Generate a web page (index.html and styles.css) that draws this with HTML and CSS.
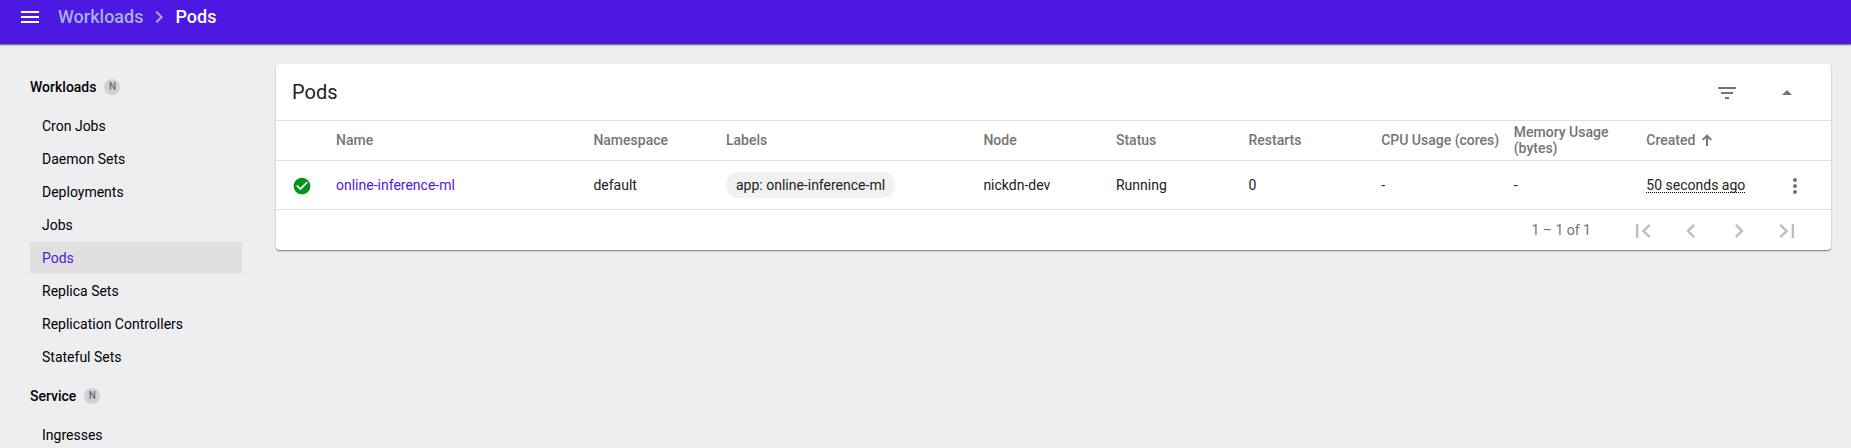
FILE: index.html
```html
<!DOCTYPE html>
<html lang="en">
<head>
<meta charset="utf-8">
<title>Pods</title>
<link rel="stylesheet" href="styles.css">
</head>
<body>
<header class="toolbar">
  <svg class="icon menu" viewBox="0 0 24 24"><path d="M3 18h18v-2H3v2zm0-5h18v-2H3v2zm0-7v2h18V6H3z"/></svg>
  <nav class="crumbs">
    <a class="crumb-link">Workloads</a>
    <svg class="icon crumb-sep" viewBox="0 0 24 24"><path d="M10 6L8.59 7.41 13.17 12l-4.58 4.59L10 18l6-6z"/></svg>
    <span>Pods</span>
  </nav>
</header>
<div class="layout">
  <nav class="sidebar">
    <div class="group-title">Workloads<span class="badge">N</span></div>
    <a class="item">Cron Jobs</a>
    <a class="item">Daemon Sets</a>
    <a class="item">Deployments</a>
    <a class="item">Jobs</a>
    <a class="item active">Pods</a>
    <a class="item">Replica Sets</a>
    <a class="item">Replication Controllers</a>
    <a class="item">Stateful Sets</a>
    <div class="group-title">Service<span class="badge">N</span></div>
    <a class="item">Ingresses</a>
  </nav>
  <main class="card">
    <div class="card-head">
      <h1 class="card-title">Pods</h1>
      <svg class="icon filter" viewBox="0 0 24 24"><path d="M10 18h4v-2h-4v2zM3 6v2h18V6H3zm3 7h12v-2H6v2z"/></svg>
      <svg class="icon" viewBox="0 0 24 24"><path d="M7 14l5-5 5 5z"/></svg>
    </div>
    <div class="row head">
      <span></span>
      <span>Name</span>
      <span>Namespace</span>
      <span>Labels</span>
      <span>Node</span>
      <span>Status</span>
      <span>Restarts</span>
      <span class="nowrap">CPU Usage (cores)</span>
      <span class="memory">Memory Usage (bytes)</span>
      <span class="sorted">Created<svg class="sort" viewBox="0 0 12 12"><path d="M5 12V4L2.4 6.6 1 5.2 6 .2l5 5-1.4 1.4L7 4v8z"/></svg></span>
      <span></span>
    </div>
    <div class="row body">
      <svg class="status" viewBox="0 0 24 24"><path d="M12 2C6.48 2 2 6.48 2 12s4.48 10 10 10 10-4.48 10-10S17.52 2 12 2zm-2 15l-5-5 1.41-1.41L10 14.17l7.59-7.59L19 8l-9 9z"/></svg>
      <a class="link">online-inference-ml</a>
      <span>default</span>
      <span class="chip">app: online-inference-ml</span>
      <span>nickdn-dev</span>
      <span>Running</span>
      <span>0</span>
      <span>-</span>
      <span>-</span>
      <span class="age">50 seconds ago</span>
      <svg class="icon more" viewBox="0 0 24 24"><path d="M12 8c1.1 0 2-.9 2-2s-.9-2-2-2-2 .9-2 2 .9 2 2 2zm0 2c-1.1 0-2 .9-2 2s.9 2 2 2 2-.9 2-2-.9-2-2-2zm0 6c-1.1 0-2 .9-2 2s.9 2 2 2 2-.9 2-2-.9-2-2-2z"/></svg>
    </div>
    <div class="pager">
      <span class="range">1 – 1 of 1</span>
      <svg class="page" viewBox="0 0 24 24"><path d="M18.41 16.59L13.82 12l4.59-4.59L17 6l-6 6 6 6zM6 6h2v12H6z"/></svg>
      <svg class="page" viewBox="0 0 24 24"><path d="M15.41 7.41L14 6l-6 6 6 6 1.41-1.41L10.83 12z"/></svg>
      <svg class="page" viewBox="0 0 24 24"><path d="M10 6L8.59 7.41 13.17 12l-4.58 4.59L10 18l6-6z"/></svg>
      <svg class="page" viewBox="0 0 24 24"><path d="M5.59 7.41L10.18 12l-4.59 4.59L7 18l6-6-6-6zM16 6h2v12h-2z"/></svg>
    </div>
  </main>
</div>
</body>
</html>
```
FILE: styles.css
```css
* { box-sizing: border-box; }

body {
  margin: 0;
  height: 448px;
  overflow: hidden;
  background: #edeef0;
  color: #000;
  font: 14px/16px Roboto, sans-serif;
}

.icon {
  width: 24px;
  height: 24px;
  flex: none;
  fill: #757575;
}

.toolbar {
  display: flex;
  align-items: flex-start;
  height: 44px;
  padding: 5px 18px;
  background: #4d18e1;
  box-shadow: 0 1px 1px rgba(0, 0, 0, .4), 0 1px 3px rgba(0, 0, 0, .2);
}

.toolbar .menu { fill: #fff; }

.crumbs {
  display: flex;
  margin-left: 16px;
  color: #fff;
  font-size: 18px;
  font-weight: 500;
  line-height: 24px;
}

.crumb-link { color: #a3b1f2; }

.toolbar .crumb-sep {
  margin: 0 4px;
  fill: #a3b1f2;
}

.layout {
  display: flex;
  align-items: flex-start;
  padding: 20px 20px 0 30px;
}

.sidebar {
  width: 212px;
  margin-right: 34px;
  padding-top: 1px;
}

.group-title {
  display: flex;
  padding: 14px 0 15px;
  font-weight: 500;
}

.badge {
  width: 16px;
  height: 16px;
  margin-left: 8px;
  border-radius: 50%;
  background: #d1d2d3;
  color: #6c6c6e;
  font-size: 10px;
  text-align: center;
}

.item {
  display: block;
  height: 32px;
  margin-bottom: 1px;
  padding-left: 12px;
  border-radius: 2px;
  line-height: 32px;
}

.item.active {
  background: #e0e0e0;
  color: #4d18e1;
}

.card {
  flex: 1;
  border-radius: 4px;
  background: #fff;
  box-shadow: 0 1px 1px rgba(0, 0, 0, .4), 0 1px 3px rgba(0, 0, 0, .12);
}

.card-head {
  display: flex;
  align-items: center;
  height: 57px;
  padding: 2px 32px 0 16px;
  border-bottom: 1px solid #e0e0e0;
}

.card-title {
  flex: 1;
  margin: 0 0 2px;
  color: #212121;
  font-size: 20px;
  font-weight: 400;
  line-height: 24px;
}

.filter { margin-right: 36px; }

.row {
  display: grid;
  grid-template-columns: 44px 257.4px 132.6px 257.4px 132.6px 132.6px 132.6px 132.6px 132.6px 136.6px 24px;
  align-items: center;
  padding-left: 16px;
  border-bottom: 1px solid #e0e0e0;
}

.head {
  height: 40px;
  padding-bottom: 1px;
  color: #757575;
  font-weight: 500;
}

.nowrap { white-space: nowrap; }
.memory { width: 110px; }

.sorted {
  display: flex;
  align-items: center;
}

.sort {
  width: 12px;
  height: 12px;
  margin-left: 6px;
  fill: #757575;
}

.body {
  height: 49px;
  color: #212121;
}

.status {
  width: 20px;
  height: 20px;
  margin-top: 2px;
  fill: #00941b;
}

.link { color: #4d18e1; }

.chip {
  justify-self: start;
  height: 26px;
  padding: 0 10px;
  border-radius: 13px;
  background: #f1f1f1;
  line-height: 26px;
}

.age {
  justify-self: start;
  height: 16px;
  border-bottom: 1px dotted #000;
}

.more { margin-top: 2px; }

.pager {
  display: flex;
  align-items: center;
  justify-content: flex-end;
  height: 40px;
  padding-right: 20px;
  color: #757575;
}

.range { margin-right: 28px; }

.page {
  width: 28px;
  height: 28px;
  margin: 2px 10px 0;
  fill: #bdbdbd;
}
```
